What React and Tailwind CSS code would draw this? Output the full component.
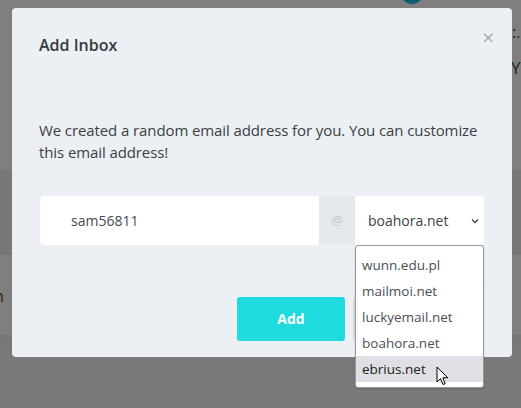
import React from "react";

const domains = ["wunn.edu.pl", "mailmoi.net", "luckyemail.net", "boahora.net", "ebrius.net"];

export default function App() {
  return (
    <div
      className="relative w-[521px] h-[408px] overflow-hidden bg-[#7f7f7f]"
      style={{ fontFamily: '"Open Sans", "Noto Sans", sans-serif' }}
    >
      {/* page behind the overlay */}
      <div className="flex flex-col h-full">
        <div className="h-[170px] relative">
          <div className="absolute left-[402px] top-[-14px] w-[20px] h-[18px] rounded-full bg-[#0f5f73]" />
          <div className="absolute left-[512px] top-[20px] text-[16px] text-[#222]">:.</div>
          <div className="absolute left-[511px] top-[55px] text-[17px] text-[#222]">Y</div>
        </div>
        <div className="h-[84px] bg-[#787878] border-b border-[#6c6c6c]" />
        <div className="h-[81px] relative">
          <div className="absolute left-[-6px] top-[30px] text-[16px] text-[#222]">n</div>
        </div>
        <div className="h-[10px] bg-[#777]" />
        <div className="flex-1 bg-[#7a7a7a]" />
      </div>

      {/* modal */}
      <div className="absolute inset-0 pt-[8px] pl-[12px]">
        <div className="w-[500px] h-[349px] bg-[#eceff3] rounded-[4px] flex flex-col">
          <div className="h-[75px] flex items-center justify-between pl-[27px] pr-[18px] border-b border-[#e8ebef]">
            <h2 className="text-[16px] font-semibold text-[#343a40] mt-[-1px]">Add Inbox</h2>
            <span className="text-[20px] leading-none text-[#a4a8ad] mt-[-15px]">×</span>
          </div>
          <div className="h-[198px] border-b border-[#e8ebef] px-[27px] pt-[36px]">
            <p className="text-[15px] leading-[22px] text-[#3b3f44] tracking-[-0.1px]">
              We created a random email address for you. You can customize this email address!
            </p>
            <div className="mt-[33px] ml-[1px] w-[444px] h-[49px] flex relative">
              <div className="w-[279px] bg-white rounded-l-[4px] flex items-center pl-[31px] text-[14px] text-[#454a50]">
                sam56811
              </div>
              <div className="w-[36px] bg-[#e5e8ec] flex items-center justify-center text-[13px] text-[#c2c6cb]">@</div>
              <div className="flex-1 bg-white rounded-r-[4px] flex items-center justify-between pl-[13px] pr-[4px] text-[14px] text-[#3d4247]">
                <span>boahora.net</span>
                <svg width="10" height="10" viewBox="0 0 10 10" fill="none" stroke="#444" strokeWidth="1.3">
                  <path d="M2 3.5 L5 6.5 L8 3.5" />
                </svg>
              </div>
            </div>
          </div>
          <div className="flex-1 flex items-center justify-end gap-[8px] pr-[28px] pb-[1px]">
            <button className="w-[108px] h-[44px] rounded-[3px] bg-[#1fdbe0] text-white font-bold text-[14px]">Add</button>
            <div className="w-[131px] h-[44px] rounded-[3px] bg-[#d9dce1]" />
          </div>
        </div>
      </div>

      {/* open select list */}
      <div className="absolute left-[355px] top-[245px] w-[129px] h-[143px] bg-white border border-[#9a9a9a] rounded-[3px] pt-[6px] shadow-[0_1px_2px_rgba(0,0,0,0.2)]">
        {domains.map((d) => (
          <div
            key={d}
            className={`h-[26px] flex items-center pl-[6px] text-[13.5px] ${
              d === "ebrius.net" ? "bg-[#dfdfe6] text-[#222]" : "text-[#4a4f55]"
            }`}
          >
            {d}
          </div>
        ))}
      </div>

      {/* mouse cursor */}
      <svg className="absolute left-[436px] top-[366px]" width="14" height="21" viewBox="0 0 14 21">
        <path d="M1 1 L1 16 L4.5 12.5 L7 18.5 L9.2 17.6 L6.8 11.8 L11.8 11.8 Z" fill="white" stroke="black" strokeWidth="1" strokeLinejoin="round" />
      </svg>
    </div>
  );
}
